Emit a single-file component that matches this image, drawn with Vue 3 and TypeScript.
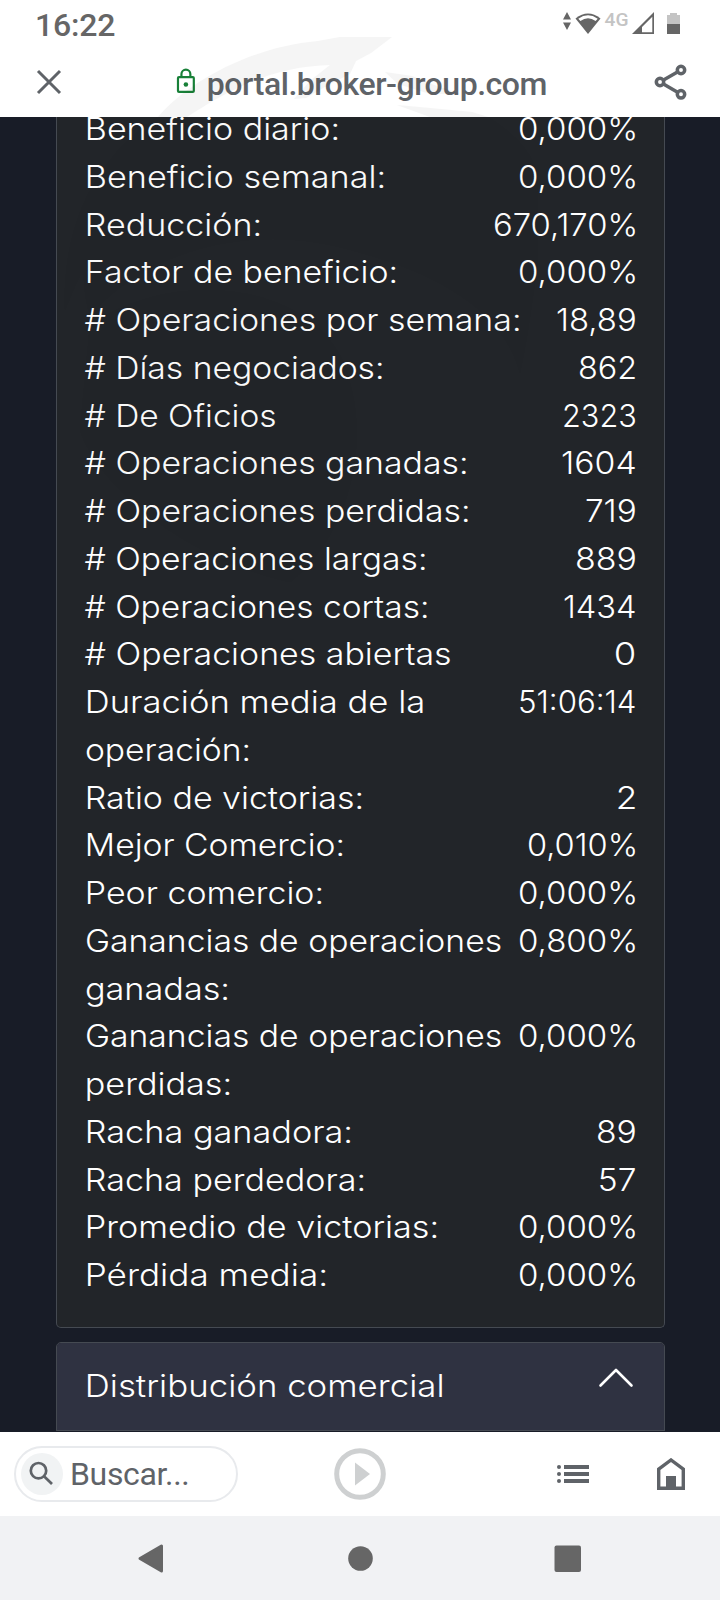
<script setup lang="ts">
interface Fit { text: string; width: number }
interface Row { label: Fit[]; value: Fit }

const FONT = '300 31px Inter'
const ctx = document.createElement('canvas').getContext('2d')!

const t = (text: string, width: number): Fit => ({ text, width })
const zero = () => t('0,000%', 116)

const rows: Row[] = [
  { label: [t('Beneficio diario:', 252)], value: zero() },
  { label: [t('Beneficio semanal:', 298)], value: zero() },
  { label: [t('Reducción:', 174)], value: t('670,170%', 141) },
  { label: [t('Factor de beneficio:', 310)], value: zero() },
  { label: [t('# Operaciones por semana:', 434)], value: t('18,89', 78) },
  { label: [t('# Días negociados:', 297)], value: t('862', 56) },
  { label: [t('# De Oficios', 191)], value: t('2323', 71) },
  { label: [t('# Operaciones ganadas:', 381)], value: t('1604', 73) },
  { label: [t('# Operaciones perdidas:', 383)], value: t('719', 49) },
  { label: [t('# Operaciones largas:', 340)], value: t('889', 59) },
  { label: [t('# Operaciones cortas:', 342)], value: t('1434', 71) },
  { label: [t('# Operaciones abiertas', 366)], value: t('0', 20) },
  { label: [t('Duración media de la', 338), t('operación:', 163)], value: t('51:06:14', 115) },
  { label: [t('Ratio de victorias:', 276)], value: t('2', 17) },
  { label: [t('Mejor Comercio:', 257)], value: t('0,010%', 107) },
  { label: [t('Peor comercio:', 236)], value: zero() },
  { label: [t('Ganancias de operaciones', 416), t('ganadas:', 142)], value: t('0,800%', 116) },
  { label: [t('Ganancias de operaciones', 416), t('perdidas:', 144)], value: zero() },
  { label: [t('Racha ganadora:', 265)], value: t('89', 38) },
  { label: [t('Racha perdedora:', 278)], value: t('57', 35) },
  { label: [t('Promedio de victorias:', 351)], value: zero() },
  { label: [t('Pérdida media:', 240)], value: zero() },
]

// Stretches a line so that its visible glyphs span the given width.
function glyphStyle(f: Fit) {
  ctx.font = FONT
  const m = ctx.measureText(f.text)
  const hash = f.text.startsWith('#')
  const stem = /^[BRFDMPp]/.test(f.text)
  const start = hash ? -1.5 : stem ? 1 : 0
  const width = f.width - (stem ? 2 : /^\D/.test(f.text) && !hash ? 1 : 0)
  const s = width / (m.actualBoundingBoxLeft + m.actualBoundingBoxRight)
  return { transform: `translateX(${start + m.actualBoundingBoxLeft * s}px) scaleX(${s})` }
}
const title = t('Distribución comercial', 357)
</script>

<template>
  <div class="screen">
    <header class="top">
      <div class="status">
        <span class="time">16:22</span>
        <svg class="signals" width="120" height="28" viewBox="560 10 120 28">
          <path d="M567 12l4 7.5h-8zM567 30l4-7.5h-8z" fill="#666" />
          <path d="M575.5 18.5Q588 8.500 600.500 18.500L588 34z" fill="#666" />
          <path d="M578.300 18.700Q588 12 597.700 18.700L595.600 21Q588 15.500 580.400 21z" fill="#fff" />
          <text x="604.500" y="25.500" class="net" textLength="24" lengthAdjust="spacingAndGlyphs">4G</text>
          <path d="M632 34L654 12v22zM642 32.300h10.300V16.800L642 27z" fill="#666" fill-rule="evenodd" />
          <path d="M667 15h3v-2h7v2h3v9h-13z" fill="#c4c4c4" />
          <path d="M667 24h13v10h-13z" fill="#666" />
        </svg>
      </div>
      <div class="bar">
        <svg width="26" height="26" viewBox="0 0 26 26" class="close"><path d="M2 2l22 22M24 2L2 24" /></svg>
        <div class="site">
          <svg width="20" height="26" viewBox="0 0 20 26" class="lock"><rect x="2" y="9" width="16" height="15" rx="1" /><path d="M5.500 9V6a4.500 4.500 0 0 1 9 0v3" /><circle cx="10" cy="16.500" r="2.300" /></svg>
          <span class="url">portal.broker-group.com</span>
        </div>
        <svg width="34" height="36" viewBox="0 0 34 36" class="share"><path d="M6 18L27 6M6 18l21 12.300" /><circle cx="6" cy="18" r="3.700" /><circle cx="27" cy="6" r="3.700" /><circle cx="27" cy="30.300" r="3.700" /></svg>
      </div>
    </header>

    <main class="content">
      <section class="card stats">
        <div v-for="(row, i) in rows" :key="i" class="row">
          <div class="label">
            <div v-for="(line, j) in row.label" :key="j" class="line" :style="{ width: line.width + 'px' }">
              <span class="glyphs" :style="glyphStyle(line)">{{ line.text }}</span>
            </div>
          </div>
          <div class="line" :style="{ width: row.value.width + 'px' }">
            <span class="glyphs" :style="glyphStyle(row.value)">{{ row.value.text }}</span>
          </div>
        </div>
      </section>
      <section class="card panel">
        <div class="panel-head">
          <div class="line" :style="{ width: title.width + 'px' }"><span class="glyphs" :style="glyphStyle(title)">{{ title.text }}</span></div>
          <svg width="36" height="22" viewBox="0 0 36 22" class="chevron"><path d="M2.500 18.500L18 3l15.500 15.500" /></svg>
        </div>
      </section>
    </main>

    <nav class="tools">
      <div class="search">
        <span class="lens"><svg width="42" height="42" viewBox="0 0 42 42"><circle cx="17.500" cy="17.700" r="7.700" /><path d="M23 23.200l8 7.800" /></svg></span>
        <span class="hint">Buscar...</span>
      </div>
      <svg class="play" width="52" height="52" viewBox="0 0 52 52"><circle cx="26" cy="26" r="23.300" /><path d="M21 14.500v23L36 26z" /></svg>
      <svg class="list" width="32" height="20" viewBox="0 0 32 20"><path d="M7 3h25M7 10h25M7 17h25" /><circle cx="2" cy="3" r="2" /><circle cx="2" cy="10" r="2" /><circle cx="2" cy="17" r="2" /></svg>
      <svg class="home" width="28" height="32" viewBox="0 0 28 32"><path d="M1.700 30.300V11.200L14 2l12.300 9.200v19.100z" /><path class="door" d="M9 18h10v12H9z" /></svg>
    </nav>
    <nav class="system">
      <svg width="720" height="84" viewBox="0 1516 720 84"><path d="M140 1558.500L161.500 1546v25z" stroke="#666" stroke-width="3" stroke-linejoin="round" /><circle cx="360.500" cy="1558.500" r="12.300" /><rect x="554.500" y="1545.500" width="26.500" height="26.500" rx="2" /></svg>
    </nav>

    <svg class="watermark" width="720" height="640" viewBox="0 0 720 640">
      <path d="M158 117C188 82 250 47 318 41L340 37H392L371 53L356 61L350 74L330 84L306 98L294 99L311 80L330 65C270 66 222 94 187 117zM385 72L412 76L437 86L460 94H430L398 84zM397 105L430 108L472 112L488 117H430z" />
      <g opacity=".5">
        <path d="M158 117H488C512 132 532 151 538 175V260C530 320 525 350 520 373C502 304 424 267 335 246C250 226 150 248 90 315C78 279 92 246 65 310C62 230 92 160 158 117z" />
        <path d="M90 325C180 265 310 285 344 364C378 455 338 545 290 582C190 560 100 490 80 430z" />
      </g>
    </svg>
  </div>
</template>

<style>
body { margin: 0; }
</style>
<style scoped>
.screen { position: relative; width: 720px; height: 1600px; overflow: hidden; display: flex; flex-direction: column; background: #181c27; font-family: Roboto, sans-serif; }
.top { height: 117px; flex: none; background: #fff; box-sizing: border-box; }
.status { height: 48px; display: flex; justify-content: space-between; align-items: flex-start; padding: 0 40px 0 35px; }
.time { font-size: 32px; line-height: 50px; font-weight: 500; color: #666; letter-spacing: -.2px; }
.signals { margin-top: 10px; }
.net { font: 500 18px Roboto, sans-serif; fill: #c4c4c4; }
.bar { height: 69px; display: flex; align-items: flex-start; }
.close { margin: 21px 0 0 36px; fill: none; stroke: #5f6368; stroke-width: 3; }
.site { width: 371px; margin-left: 114px; display: flex; }
.lock { margin-top: 20px; fill: none; stroke: #188038; stroke-width: 2.2; }
.lock circle { fill: #188038; stroke: none; }
.url { margin: 17px 0 0 11px; font-size: 32px; line-height: 38px; font-weight: 500; color: #5f6368; white-space: nowrap; letter-spacing: -.45px; }
.share { margin: 16px 0 0 107px; fill: none; stroke: #5f6368; stroke-width: 3.5; }
.share circle { fill: #fff; }
.content { height: 1314px; flex: none; overflow: hidden; padding: 0 55px 0 56px; display: flex; flex-direction: column; gap: 14px; font: 300 31px Inter, sans-serif; color: #fff; box-sizing: border-box; }
.card { border: 1px solid #454a52; box-sizing: border-box; flex: none; }
.stats { height: 1211px; border-top: 0; border-radius: 0 0 5px 5px; background: #222529; padding: 0 29px; }
.row { display: flex; justify-content: space-between; align-items: flex-start; }
.stats .row:first-child { margin-top: -12px; }
.line { height: 47.75px; line-height: 47.75px; white-space: nowrap; }
.glyphs { display: inline-block; transform-origin: 0 50%; font-kerning: normal; }
.panel { height: 120px; border-radius: 5px 5px 0 0; background: #212428; overflow: hidden; }
.panel-head { height: 88px; box-sizing: border-box; background: #2f3241; border-bottom: 1px solid #454a52; display: flex; justify-content: space-between; align-items: flex-start; padding: 19px 30px 0 29px; }
.chevron { margin-top: 4.5px; fill: none; stroke: #fff; stroke-width: 2.6; stroke-linecap: round; stroke-linejoin: round; }
.tools { height: 84px; flex: none; background: #fff; display: flex; align-items: center; margin-top: 1px; }
.search { width: 224px; height: 56px; box-sizing: border-box; border: 2px solid #e8eaed; border-radius: 28px; margin-left: 14px; display: flex; align-items: center; padding-left: 5px; }
.lens { width: 42px; height: 42px; border-radius: 50%; background: #f1f3f4; }
.lens svg { display: block; fill: none; stroke: #5f6368; stroke-width: 2.7; }
.hint { margin-left: 7px; font-size: 32px; line-height: 40px; color: #5f6368; letter-spacing: -.35px; }
.play { margin-left: 96px; fill: none; stroke: #ced0d1; stroke-width: 5; }
.play path { fill: #ced0d1; stroke: none; }
.list { margin-left: 171px; fill: #5f6368; }
.list path { stroke: #5f6368; stroke-width: 4; }
.home { margin-left: 68px; fill: none; stroke: #5f6368; stroke-width: 3.4; }
.home .door { fill: #5f6368; stroke: none; }
.system { height: 84px; background: #f1f2f4; fill: #666; }
.system svg { display: block; }
.watermark { position: absolute; left: 0; top: 0; fill: #000; opacity: .035; pointer-events: none; }
</style>
